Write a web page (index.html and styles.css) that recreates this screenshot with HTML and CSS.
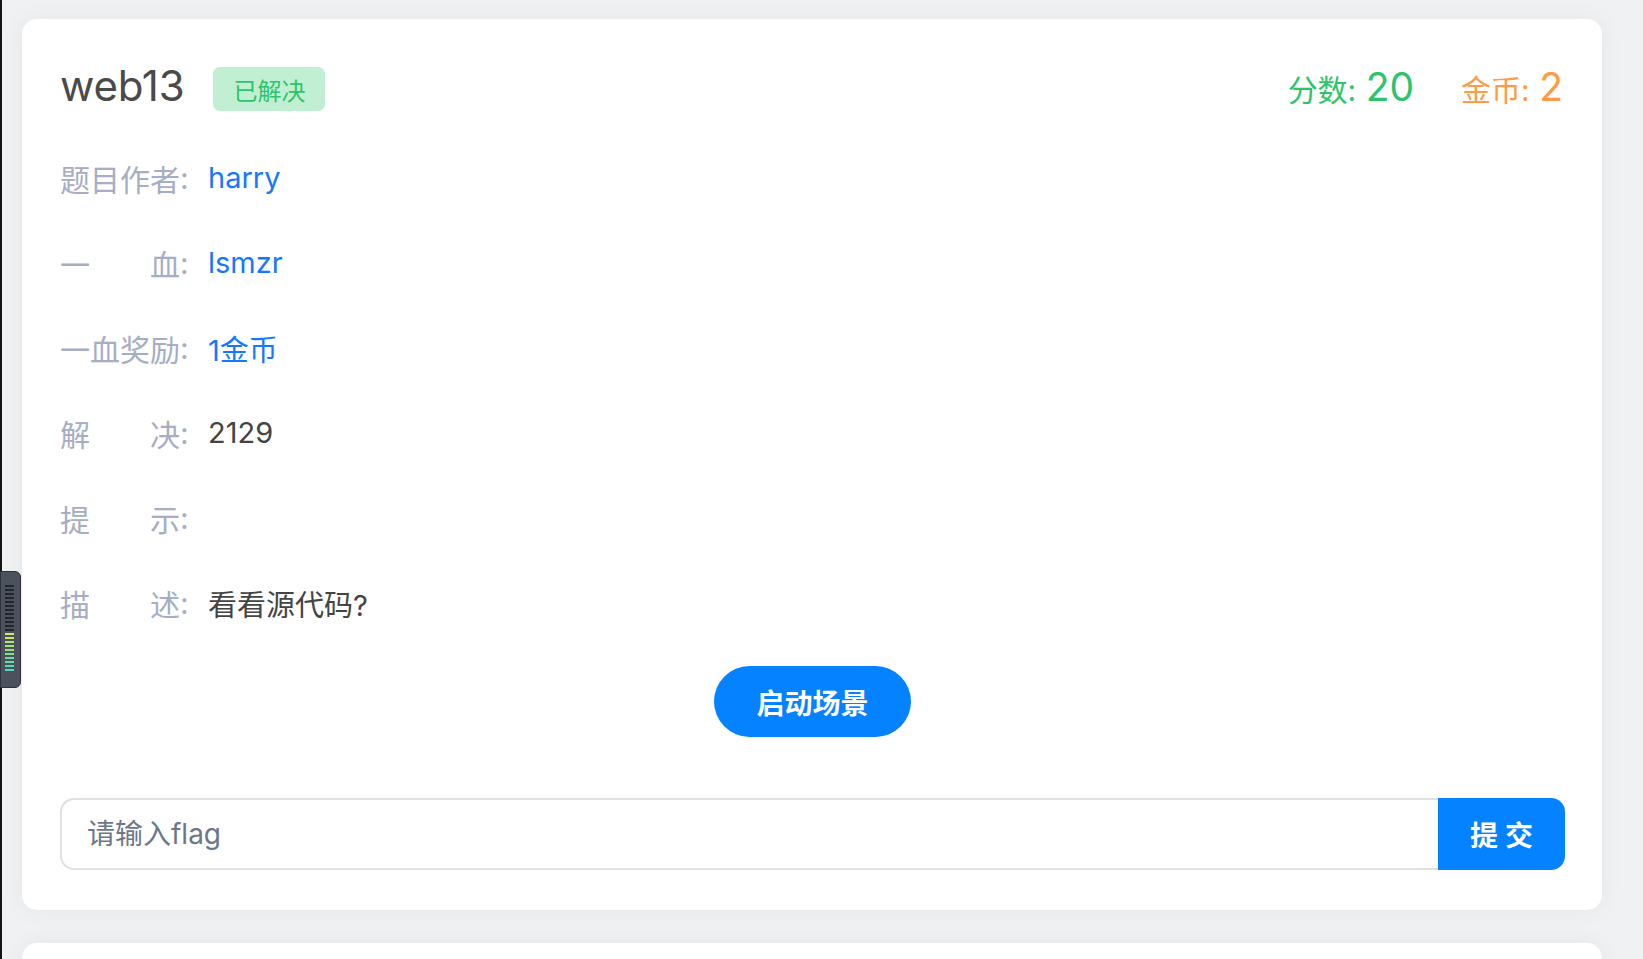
FILE: index.html
```html
<!DOCTYPE html>
<html lang="zh">
<head>
<meta charset="utf-8">
<title>web13</title>
<link rel="stylesheet" href="styles.css">
</head>
<body>
<div class="page">
  <div class="card">
    <div class="head">
      <div class="title-wrap">
        <h1 class="title">web13</h1>
        <span class="badge">已解决</span>
      </div>
      <div class="stats">
        <span class="stat score">分数: <b>20</b></span>
        <span class="stat coin">金币: <b>2</b></span>
      </div>
    </div>
    <div class="rows">
      <div class="row"><span class="k">题目作者</span><span class="colon">:</span><span class="v link">harry</span></div>
      <div class="row"><span class="k">一血</span><span class="colon">:</span><span class="v link">lsmzr</span></div>
      <div class="row"><span class="k">一血奖励</span><span class="colon">:</span><span class="v link">1金币</span></div>
      <div class="row"><span class="k">解决</span><span class="colon">:</span><span class="v">2129</span></div>
      <div class="row"><span class="k">提示</span><span class="colon">:</span><span class="v"></span></div>
      <div class="row"><span class="k">描述</span><span class="colon">:</span><span class="v">看看源代码?</span></div>
    </div>
    <div class="launch-wrap"><button class="launch">启动场景</button></div>
    <form class="flag-form">
      <input class="flag-input" type="text" placeholder="请输入flag">
      <button class="submit" type="button">提交</button>
    </form>
  </div>
  <div class="card card-next"></div>
</div>
<div class="meter">
  <span class="bar d"></span><span class="bar d"></span><span class="bar d"></span><span class="bar d"></span><span class="bar d"></span><span class="bar d"></span><span class="bar d"></span><span class="bar d"></span><span class="bar d"></span><span class="bar d"></span><span class="bar d"></span><span class="bar d"></span>
  <span class="bar c1"></span><span class="bar c2"></span><span class="bar c3"></span><span class="bar c4"></span><span class="bar c5"></span><span class="bar c6"></span><span class="bar c7"></span><span class="bar c8"></span><span class="bar c9"></span><span class="bar c10"></span>
</div>
</body>
</html>
```

FILE: styles.css
```css
* { box-sizing: border-box; }
html, body { height: 100%; }
body {
  margin: 0;
  background: #f0f1f3;
  border-left: 2px solid #151515;
  font-family: "Inter", "Noto Sans CJK SC", sans-serif;
  overflow: hidden;
}
.page {
  padding: 19px 41px 0 20px;
}
.card {
  background: #fff;
  border-radius: 15px;
  padding: 40px 37px 40px 38px;
  box-shadow: 0 0 24px rgba(0, 0, 0, 0.05);
}
.card-next {
  margin-top: 33px;
  height: 120px;
}
.head {
  display: flex;
  justify-content: space-between;
  align-items: center;
  height: 54px;
}
.title-wrap {
  display: flex;
  align-items: center;
}
.title {
  margin: 0;
  font-size: 42px;
  font-weight: 400;
  color: #4a4a4a;
  line-height: 1;
  letter-spacing: -0.2px;
}
.badge {
  margin-left: 29px;
  width: 112px;
  height: 44px;
  border-radius: 7px;
  background: #c0efd4;
  color: #2ec46a;
  font-size: 24px;
  display: flex;
  align-items: center;
  justify-content: center;
  margin-top: 6px;
}
.stats {
  display: flex;
  align-items: baseline;
  gap: 47px;
  margin-right: 2px;
}
.stat {
  font-size: 30px;
}
.stat b {
  font-weight: 400;
  font-size: 39px;
  margin-left: 1px;
}
.score { color: #2ec46a; }
.coin { color: #ff9a45; }
.rows {
  margin-top: 22px;
}
.row {
  height: 85px;
  display: flex;
  align-items: center;
  font-size: 29px;
}
.k {
  width: 120px;
  font-size: 30px;
  color: #a6adc4;
  text-align: justify;
  text-align-last: justify;
}
.colon {
  color: #a6adc4;
  font-size: 30px;
  width: 28px;
}
.v {
  color: #444;
}
.v.link {
  color: #1677ff;
}
.launch-wrap {
  display: flex;
  justify-content: center;
  margin-top: 21px;
}
.launch {
  width: 197px;
  height: 71px;
  border: none;
  border-radius: 36px;
  background: #0582ff;
  color: #fff;
  font-family: "Noto Sans CJK SC", sans-serif;
  font-weight: 700;
  font-size: 28px;
  padding: 0;
}
.flag-form {
  display: flex;
  margin: 61px 0 0 0;
  height: 72px;
}
.flag-input {
  flex: 1;
  height: 72px;
  border: 2px solid #e1e1e1;
  border-right: none;
  border-radius: 14px 0 0 14px;
  padding: 0 0 0 25px;
  font-family: "Inter", "Noto Sans CJK SC", sans-serif;
  font-size: 28px;
  color: #444;
  outline: none;
}
.flag-input::placeholder {
  color: #6c7789;
}
.submit {
  width: 127px;
  height: 72px;
  border: none;
  border-radius: 0 14px 14px 0;
  background: #0582ff;
  color: #fff;
  font-family: "Noto Sans CJK SC", sans-serif;
  font-weight: 700;
  font-size: 28px;
  letter-spacing: 7px;
  padding: 0 0 0 7px;
}
.meter {
  position: absolute;
  left: 0;
  top: 571px;
  width: 21px;
  height: 117px;
  background: #4c515e;
  border-radius: 0 6px 6px 0;
  border: 1px solid #2f323a;
  padding: 13px 0 0 4px;
  display: flex;
  flex-direction: column;
  gap: 2px;
}
.bar {
  display: block;
  width: 9px;
  height: 2px;
  background: #23262d;
}
.bar.c1 { background: #d8e85a; }
.bar.c2 { background: #c9e860; }
.bar.c3 { background: #b5e66a; }
.bar.c4 { background: #a2e472; }
.bar.c5 { background: #8fe27c; }
.bar.c6 { background: #7ee088; }
.bar.c7 { background: #6edd96; }
.bar.c8 { background: #60dca4; }
.bar.c9 { background: #55dbb2; }
.bar.c10 { background: #4cdabe; }
```
